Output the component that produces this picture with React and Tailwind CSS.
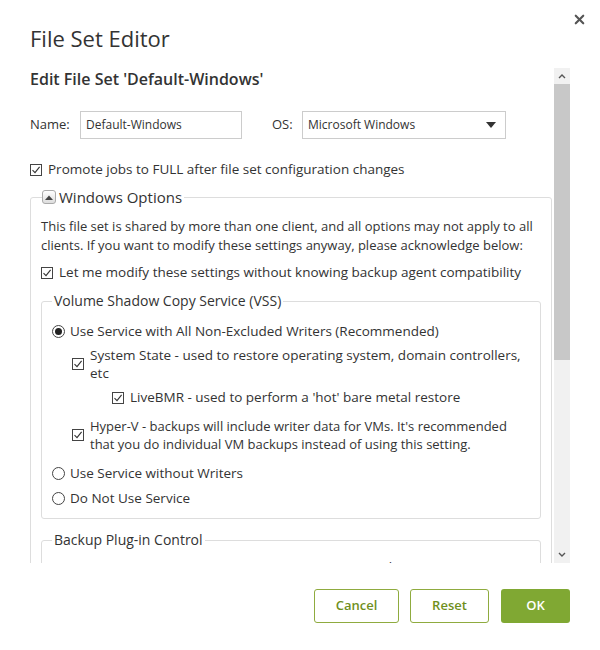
import { X } from 'lucide-react'

const font = { fontFamily: '"Open Sans", "Noto Sans", sans-serif' }

function CheckBox() {
  return (
    <span className="inline-flex h-[12px] w-[12px] shrink-0 items-center justify-center border border-[#444] bg-white">
      <svg width="10" height="10" viewBox="0 0 10 10" fill="none">
        <path d="M1.5 5.2 L4 7.6 L8.6 1.8" stroke="#333" strokeWidth="1.1" />
      </svg>
    </span>
  )
}

function Radio({ checked }) {
  return (
    <span className="inline-flex h-[13px] w-[13px] shrink-0 items-center justify-center rounded-full border border-[#444] bg-white">
      {checked && <span className="h-[7px] w-[7px] rounded-full bg-[#222]" />}
    </span>
  )
}

function CheckRow({ children, className = '' }) {
  return (
    <label className={`flex items-center gap-[6px] ${className}`}>
      <CheckBox />
      <span>{children}</span>
    </label>
  )
}

function RadioRow({ checked, children, className = '' }) {
  return (
    <label className={`flex items-center gap-[5px] ${className}`}>
      <Radio checked={checked} />
      <span>{children}</span>
    </label>
  )
}

function Scrollbar() {
  return (
    <div className="flex w-[16px] shrink-0 flex-col bg-[#f1f1f1]">
      <div className="flex h-[16px] items-center justify-center">
        <svg width="8" height="6" viewBox="0 0 8 6"><path d="M1 5 L4 2 L7 5" stroke="#555" strokeWidth="1.4" fill="none" /></svg>
      </div>
      <div className="h-[276px] bg-[#c8c8c8]" />
      <div className="flex-1" />
      <div className="flex h-[16px] items-center justify-center">
        <svg width="8" height="6" viewBox="0 0 8 6"><path d="M1 1 L4 4 L7 1" stroke="#555" strokeWidth="1.4" fill="none" /></svg>
      </div>
    </div>
  )
}

export default function App() {
  return (
    <div className="relative h-[650px] w-[600px] bg-white text-[13.5px] text-[#333]" style={font}>
      <button className="absolute right-[13px] top-[12px] text-[#555]">
        <X size={15} strokeWidth={3.4} />
      </button>

      <div className="px-[30px] pt-[24px]">
        <h1 className="text-[22px] leading-[28px] text-[#333]">File Set Editor</h1>

        <div className="mt-[16px] flex h-[495px] gap-[2px]">
          <div className="min-w-0 flex-1 overflow-hidden">
            <h2 className="pt-[1px] text-[16px] font-semibold leading-[20px] text-[#333]">Edit File Set 'Default-Windows'</h2>

            <div className="mt-[22px] flex items-center text-[13px]">
              <span className="w-[50px]">Name:</span>
              <div className="flex h-[28px] w-[162px] items-center border border-[#ccc] px-[5px] text-[12px]">Default-Windows</div>
              <span className="ml-[30px] w-[30px]">OS:</span>
              <div className="flex h-[28px] w-[204px] items-center justify-between border border-[#ccc] pl-[5px] pr-[9px] text-[12px]">
                <span>Microsoft Windows</span>
                <svg width="10" height="6" viewBox="0 0 10 6"><path d="M0 0 H10 L5 6 Z" fill="#333" /></svg>
              </div>
            </div>

            <CheckRow className="mt-[21px] leading-[19px]">Promote jobs to FULL after file set configuration changes</CheckRow>

            <fieldset className="mt-[8px] rounded-t-[3px] border border-[#ddd] px-[10px] pb-[20px]">
              <legend className="ml-[1px] flex items-center gap-[3px] pr-[2px] text-[15px] leading-[20px]">
                <span className="flex h-[14px] w-[14px] items-center justify-center rounded-[3px] border border-[#aaa] bg-gradient-to-b from-white to-[#ddd]">
                  <svg width="8" height="5" viewBox="0 0 8 5"><path d="M0 5 L4 0.5 L8 5 Z" fill="#444" /></svg>
                </span>
                <span>Windows Options</span>
              </legend>

              <p className="mt-[10px] text-[13px] leading-[19px]">
                This file set is shared by more than one client, and all options may not apply to all clients. If you want to modify these settings anyway, please acknowledge below:
              </p>

              <CheckRow className="mt-[8px] leading-[19px]">Let me modify these settings without knowing backup agent compatibility</CheckRow>

              <fieldset className="mt-[9px] rounded-[3px] border border-[#ddd] px-[10px] pb-[10px]">
                <legend className="px-[2px] text-[14px] leading-[20px]">Volume Shadow Copy Service (VSS)</legend>

                <RadioRow checked className="mt-[11px] leading-[19px]">Use Service with All Non-Excluded Writers (Recommended)</RadioRow>

                <div className="mt-[5px] flex items-center gap-[6px] pl-[20px] leading-[18px]">
                  <CheckBox />
                  <span>System State - used to restore operating system, domain controllers, etc</span>
                </div>

                <CheckRow className="mt-[6px] pl-[60px] leading-[19px]">LiveBMR - used to perform a 'hot' bare metal restore</CheckRow>

                <div className="mt-[10px] flex items-center gap-[6px] pl-[20px] leading-[18px]">
                  <CheckBox />
                  <span className="text-[13px]">Hyper-V - backups will include writer data for VMs. It's recommended that you do individual VM backups instead of using this setting.</span>
                </div>

                <RadioRow className="mt-[11px] leading-[19px]">Use Service without Writers</RadioRow>
                <RadioRow className="mt-[6px] leading-[19px]">Do Not Use Service</RadioRow>
              </fieldset>

              <fieldset className="mt-[11px] rounded-[3px] border border-[#ddd] px-[10px] pb-[10px]">
                <legend className="px-[2px] text-[14px] leading-[20px]">Backup Plug-in Control</legend>
                <div className="mt-[8px] pl-[301px] leading-[19px]">Use Client</div>
              </fieldset>
            </fieldset>
          </div>
          <Scrollbar />
        </div>

        <div className="mt-[26px] flex justify-end gap-[11px]">
          <button className="h-[34px] w-[85px] rounded-[3px] border border-[#8fab3f] text-[13px] font-semibold text-[#6f8f1d]">Cancel</button>
          <button className="h-[34px] w-[79px] rounded-[3px] border border-[#8fab3f] text-[13px] font-semibold text-[#6f8f1d]">Reset</button>
          <button className="ml-[1px] h-[34px] w-[69px] rounded-[3px] bg-[#80a833] text-[13px] font-semibold text-white">OK</button>
        </div>
      </div>
    </div>
  )
}
